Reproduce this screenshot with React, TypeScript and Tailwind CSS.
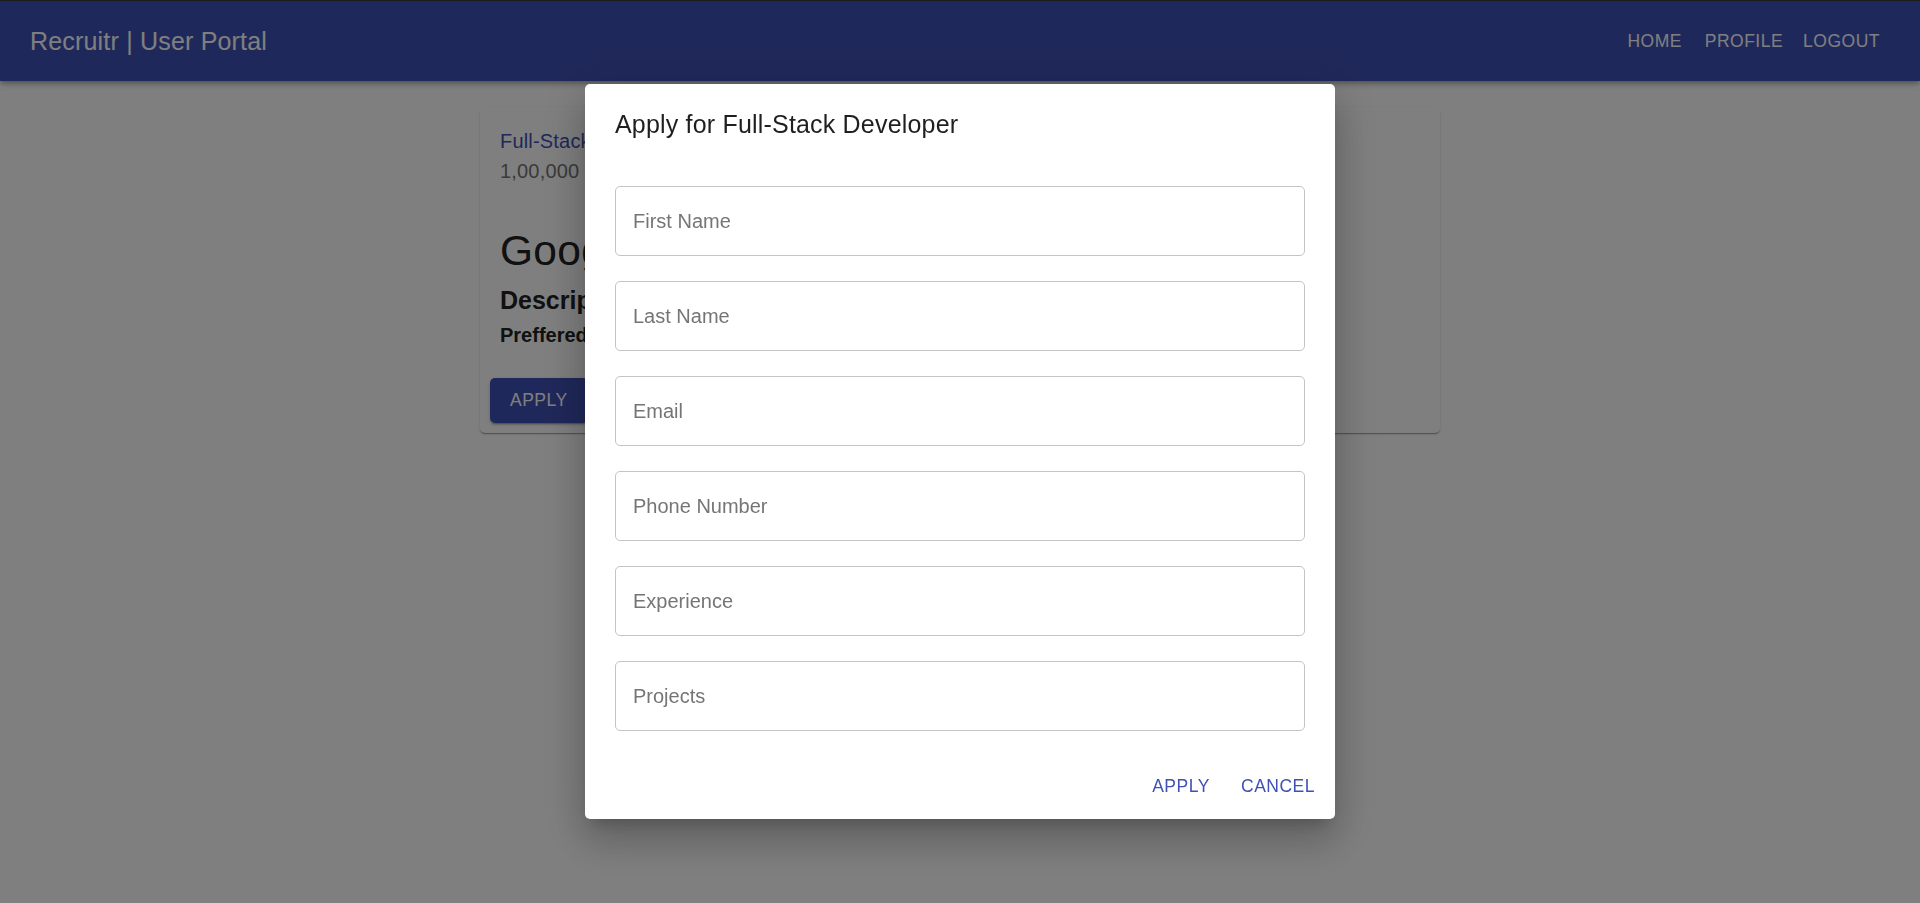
// Recruitr user portal: job card with the apply dialog open
const fields = ['First Name', 'Last Name', 'Email', 'Phone Number', 'Experience', 'Projects'];

function Header() {
  return (
    <header className="border-t border-[#3a3a3a] bg-[#3f51b5] text-white shadow-[0px_2px_4px_-1px_rgba(0,0,0,0.2),0px_4px_5px_0px_rgba(0,0,0,0.14),0px_1px_10px_0px_rgba(0,0,0,0.12)]">
      <div className="flex h-[80px] items-center justify-between pl-[30px] pr-[30px]">
        <h6 className="text-[25px] leading-[40px] tracking-[0.0075em]">Recruitr | User Portal</h6>
        <nav className="flex">
          {['HOME', 'PROFILE', 'LOGOUT'].map((item) => (
            <button
              key={item}
              className="min-w-[80px] px-[10px] py-[7px] text-[17.5px] leading-[30px] tracking-[0.02857em]"
            >
              {item}
            </button>
          ))}
        </nav>
      </div>
    </header>
  );
}

function JobCard() {
  return (
    <div className="mx-auto mt-[26px] w-[960px] rounded-[5px] bg-white shadow-[0px_2px_1px_-1px_rgba(0,0,0,0.2),0px_1px_1px_0px_rgba(0,0,0,0.14),0px_1px_3px_0px_rgba(0,0,0,0.12)]">
      <div className="px-[20px] pt-[19px]">
        <p className="text-[20px] leading-[30px] tracking-[0.00938em] text-[#3f51b5]">Full-Stack Developer</p>
        <p className="text-[20px] leading-[30px] tracking-[0.00938em] text-[#757575]">1,00,000 per annum</p>
        <h4 className="mt-[39px] text-[42.5px] leading-[52.5px] tracking-[0.00735em] text-[#222]">Google</h4>
        <h6 className="mt-[2px] text-[25px] font-bold leading-[40px] text-[#222]">Description: Build and maintain web applications</h6>
        <p className="text-[20px] font-bold leading-[30px] text-[#222]">Preffered Skills: React, Node.js, MongoDB</p>
      </div>
      <div className="px-[10px] pb-[10px] pt-[28px]">
        <button className="h-[45px] min-w-[80px] rounded-[5px] bg-[#3f51b5] px-[20px] text-[17.5px] tracking-[0.02857em] text-white shadow-[0px_3px_1px_-2px_rgba(0,0,0,0.2),0px_2px_2px_0px_rgba(0,0,0,0.14),0px_1px_5px_0px_rgba(0,0,0,0.12)]">
          APPLY
        </button>
      </div>
    </div>
  );
}

function ApplyDialog() {
  return (
    <div className="fixed inset-0 flex items-center justify-center bg-black/50">
      <div className="flex w-[750px] flex-col rounded-[5px] bg-white shadow-[0px_11px_15px_-7px_rgba(0,0,0,0.2),0px_24px_38px_3px_rgba(0,0,0,0.14),0px_9px_46px_8px_rgba(0,0,0,0.12)]">
        <h2 className="px-[30px] py-[20px] text-[25px] leading-[40px] tracking-[0.0075em] text-[#1f1f1f]">
          Apply for Full-Stack Developer
        </h2>
        <div className="flex flex-col gap-[25px] px-[30px] pb-[23px] pt-[22px]">
          {fields.map((f) => (
            <input
              key={f}
              placeholder={f}
              className="h-[70px] w-full rounded-[5px] border border-[#c4c4c4] px-[17px] text-[20px] text-[#222] outline-none placeholder:text-[#757575]"
            />
          ))}
        </div>
        <div className="flex justify-end gap-[10px] p-[10px]">
          <button className="h-[45px] min-w-[80px] px-[10px] text-[17.5px] tracking-[0.02857em] text-[#3f51b5]">APPLY</button>
          <button className="h-[45px] min-w-[80px] px-[10px] text-[17.5px] tracking-[0.02857em] text-[#3f51b5]">CANCEL</button>
        </div>
      </div>
    </div>
  );
}

export default function App() {
  return (
    <div className="min-h-[903px] bg-white font-['Liberation_Sans',Arial,sans-serif]">
      <Header />
      <JobCard />
      <ApplyDialog />
    </div>
  );
}
